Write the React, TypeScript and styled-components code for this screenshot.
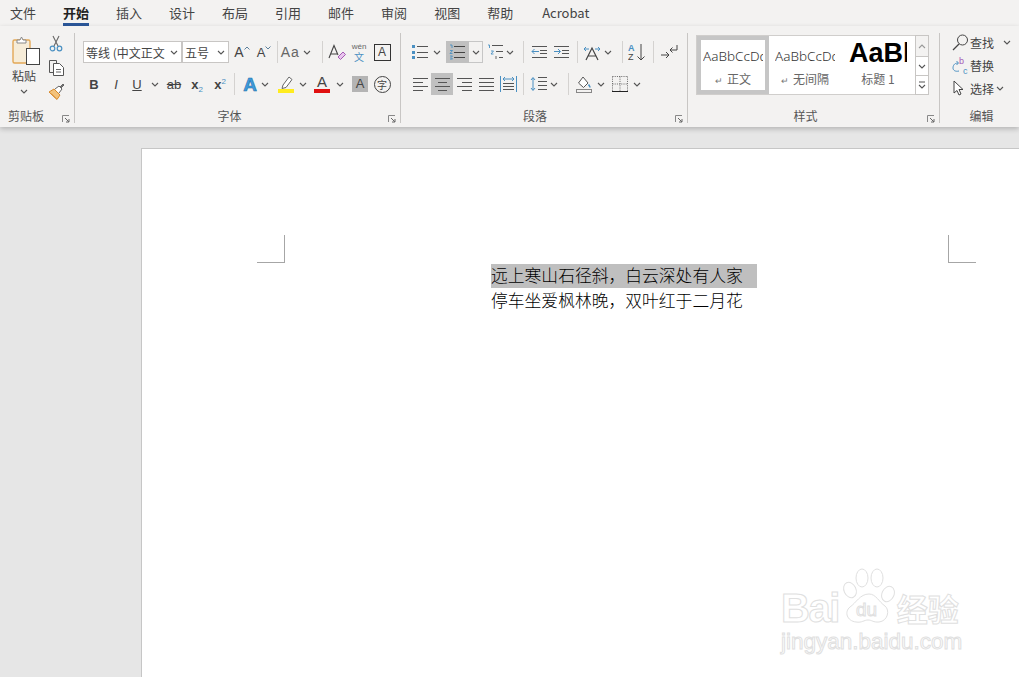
import React from "react";
import styled, { createGlobalStyle } from "styled-components";

const BLUE = "#4a90c2";
const CJK = `"Noto Sans CJK SC", "Noto Sans", sans-serif`;

const GlobalStyle = createGlobalStyle`
  html, body { margin: 0; padding: 0; background: #e6e6e6; }
  body { font-family: ${CJK}; color: #333; overflow: hidden; }
`;

const Drawing = styled.svg`
  display: block;
  flex-shrink: 0;
`;

// small drawings used on the ribbon
const Svg: React.FC<{ w?: number; h?: number; children: React.ReactNode }> = ({ w = 18, h = 18, children }) => (
  <Drawing width={w} height={h} viewBox={`0 0 ${w} ${h}`} fill="none">
    {children}
  </Drawing>
);

const Chevron = () => (
  <Svg w={8} h={5}>
    <path d="M1 1l3 3 3-3" stroke="#555" strokeWidth="1.1" />
  </Svg>
);

const ChevronUp = () => (
  <Svg w={8} h={5}>
    <path d="M1 4l3-3 3 3" stroke="#999" strokeWidth="1.1" />
  </Svg>
);

const MoreChevron = () => (
  <Svg w={8} h={8}>
    <path d="M1 1h6M1 4l3 3 3-3" stroke="#555" strokeWidth="1.1" />
  </Svg>
);

const Caret: React.FC<{ down?: boolean }> = ({ down }) => (
  <CaretBox>
    <Svg w={6} h={4}>
      <path d={down ? "M.5 .5l2.500 2.500 2.500-2.500" : "M.5 3.500l2.500-2.500 2.500 2.500"} stroke="#5a7f9c" />
    </Svg>
  </CaretBox>
);

const Launcher = () => (
  <Svg w={8} h={8}>
    <path d="M.5 7V.5H7" stroke="#888" />
    <path d="M3 3l4 4M4 7h3V4" stroke="#666" />
  </Svg>
);

const PasteIcon = () => (
  <Svg w={30} h={31}>
    <rect x="2" y="5" width="17" height="23" rx="1.5" fill="#f6ecd8" stroke="#e3a857" strokeWidth="1.4" />
    <path d="M6 8V5h3l1.5-3 1.5 3h3v3z" fill="#fff" stroke="#888" />
    <rect x="15.5" y="13.5" width="13" height="16" fill="#fff" stroke="#444" />
  </Svg>
);

const Scissors = () => (
  <Svg w={14} h={17}>
    <path d="M4 1l5 10M10 1L5 11" stroke="#666" strokeWidth="1.1" />
    <circle cx="3.5" cy="13.5" r="2.3" stroke={BLUE} strokeWidth="1.2" />
    <circle cx="10.5" cy="13.5" r="2.3" stroke={BLUE} strokeWidth="1.2" />
  </Svg>
);

const CopyIcon = () => (
  <Svg w={17} h={17}>
    <path d="M5.5 13.5h-4v-12h7v3" stroke="#555" />
    <path d="M5.5 4.5h6l4 4v8h-10z" fill="#fff" stroke="#555" />
    <path d="M8 10.5h5M8 13h5" stroke="#666" />
  </Svg>
);

const BrushIcon = () => (
  <Svg w={17} h={17}>
    <path d="M1 9l5-3 6 6-3 4.5z" fill="#f3c27b" stroke="#d88a2c" />
    <path d="M7 6l4-3 3 3-3 4" fill="#fff" stroke="#666" />
    <path d="M12 4l3-3 1 1-3 3" fill="#777" stroke="#666" />
    <path d="M3 10.5l5 5" stroke="#d88a2c" />
  </Svg>
);

const lines = (x1: number, x2: number, ys: number[], color = "#555") =>
  ys.map(y => <path key={y} d={`M${x1} ${y + 0.5}H${x2}`} stroke={color} />);

const Bullets = () => (
  <Svg w={17} h={16}>
    <rect x="0" y="1" width="3" height="3" fill={BLUE} />
    <rect x="0" y="7" width="3" height="3" fill={BLUE} />
    <rect x="0" y="12" width="3" height="3" fill={BLUE} />
    {lines(5, 16, [2, 8, 13])}
  </Svg>
);

const Numbered = () => (
  <Svg w={17} h={16}>
    <path d="M1 1h2v3M1 6.5h2.5L1 9.5h2.5M1 12h2.5L2 13.500l1.500 1.500H1" stroke={BLUE} strokeWidth=".9" />
    {lines(5, 16, [2, 8, 13], "#444")}
  </Svg>
);

const Multilevel = () => (
  <Svg w={17} h={16}>
    <path d="M1 1h1.500v3M4 7h2.500L4 10h2.500" stroke={BLUE} strokeWidth=".9" />
    <path d="M9 12v3" stroke="#666" />
    {lines(5, 16, [1])}
    {lines(9, 16, [7])}
    {lines(12, 16, [13])}
  </Svg>
);

const Indent: React.FC<{ grow?: boolean }> = ({ grow }) => (
  <Svg w={17} h={14}>
    {lines(1, 16, [1, 12])}
    {lines(9, 16, [5, 8])}
    <path
      d={grow ? "M1 6.500h6M5 4l2.500 2.500L5 9" : "M8 6.500H1M3.500 4L1 6.500 3.500 9"}
      stroke={BLUE}
    />
  </Svg>
);

const DirectionIcon = () => (
  <Svg w={18} h={17}>
    <path d="M1 5h5M3 3L1 5l2 2M17 5h-5M15 3l2 2-2 2" stroke={BLUE} />
    <path d="M3 16L9 4l6 12M5.500 12h7" stroke="#444" strokeWidth="1.2" />
  </Svg>
);

const SortIcon = () => (
  <Svg w={18} h={18}>
    <text x="0" y="8" fontSize="9" fontWeight="700" fill={BLUE} fontFamily="Liberation Sans, sans-serif">A</text>
    <text x="0" y="17" fontSize="9" fill="#444" fontFamily="Liberation Sans, sans-serif">Z</text>
    <path d="M13 1v16M9.500 13.500L13 17l3.500-3.500" stroke="#444" />
  </Svg>
);

const ShowMarks = () => (
  <Svg w={18} h={16}>
    <path d="M1 11h8M6 8l3 3-3 3" stroke="#444" />
    <path d="M17 1v5h-7M12.500 3.500L10 6l2.500 2.500" stroke="#444" />
  </Svg>
);

const AlignIcon: React.FC<{ kind: "left" | "center" | "right" | "full" }> = ({ kind }) => {
  const rows: [number, number, number][] = {
    left: [[1, 16, 1], [1, 11, 5], [1, 16, 9], [1, 11, 13]],
    center: [[1, 16, 1], [4, 13, 5], [1, 16, 9], [4, 13, 13]],
    right: [[1, 16, 1], [6, 16, 5], [1, 16, 9], [6, 16, 13]],
    full: [[1, 16, 1], [1, 16, 5], [1, 16, 9], [1, 16, 13]],
  }[kind] as [number, number, number][];
  return (
    <Svg w={17} h={15}>
      {rows.map(([a, b, y]) => (
        <path key={y} d={`M${a} ${y + 0.5}H${b}`} stroke="#555" />
      ))}
    </Svg>
  );
};

const DistributedIcon = () => (
  <Svg w={17} h={16}>
    <path d="M.5 0v16M16.500 0v16" stroke={BLUE} />
    <path d="M3 3h11M5 1L3 3l2 2M12 1l2 2-2 2" stroke={BLUE} />
    {lines(3, 14, [7, 10, 13])}
  </Svg>
);

const LineSpacing = () => (
  <Svg w={18} h={16}>
    <path d="M3 2v12M1 4l2-2.500L5 4M1 12l2 2.500L5 12" stroke={BLUE} />
    {lines(8, 17, [1, 5, 9, 13])}
  </Svg>
);

const FillIcon = () => (
  <Svg w={16} h={17}>
    <path d="M7 1l5 6-4.500 4.500L2.500 7z" stroke="#555" fill="#fff" />
    <path d="M12.500 8.500c1 1.500 1.500 2 1.500 3" stroke={BLUE} strokeWidth="1.500" />
    <rect x=".5" y="13.500" width="15" height="3" fill="#f3f2f1" stroke="#888" />
  </Svg>
);

const BorderIcon = () => (
  <Svg w={16} h={16}>
    <path d="M.5.5h15M.5.500v15M15.500.5v15M8 .5v15M.5 8h15" stroke="#666" strokeDasharray="1 1.200" />
    <path d="M0 15.500h16" stroke="#222" />
  </Svg>
);

const EraserA = () => (
  <Svg w={18} h={17}>
    <path d="M1 14L6 1.500 10 11M2.500 10H9" stroke="#444" strokeWidth="1.1" />
    <path d="M10 13l5-5 2.500 2.500-5 5z" fill="#e9c6ee" stroke="#a55bb5" />
  </Svg>
);

const HighlightIcon = () => (
  <Svg w={17} h={18}>
    <path d="M5 10l6-8 3 2.500-6 8-4 1z" fill="#fff" stroke="#666" />
    <rect x="0" y="14" width="16" height="4" fill="#ffec1f" />
  </Svg>
);

const SearchIcon = () => (
  <Svg w={17} h={17}>
    <circle cx="10.500" cy="6" r="5" stroke="#444" />
    <path d="M7 10l-6 6" stroke="#444" strokeWidth="1.200" />
  </Svg>
);

const ReplaceIcon = () => (
  <Svg w={17} h={18}>
    <text x="7" y="7" fontSize="9" fill="#a55bb5" fontFamily="Liberation Sans, sans-serif">b</text>
    <text x="11" y="17" fontSize="9" fill={BLUE} fontFamily="Liberation Sans, sans-serif">c</text>
    <path d="M6 6C2 6 1 9 1 11c0 2 2 4 6 3M4.500 4L6.500 6 4.500 8" stroke={BLUE} />
  </Svg>
);

const CursorIcon = () => (
  <Svg w={14} h={17}>
    <path d="M2 1v12l3-2.500 2 4.500 2-1-2-4.500h4z" fill="#fff" stroke="#444" />
  </Svg>
);

const Screen = styled.div`
  position: relative;
  width: 1019px;
  height: 677px;
  overflow: hidden;
  display: flex;
  flex-direction: column;
  background: #e6e6e6;
`;

const TabBar = styled.div`
  display: flex;
  height: 26px;
  padding-left: 10px;
  background: #f3f2f1;
  box-sizing: border-box;
`;

const Tab = styled.div<{ $active?: boolean; $ml?: number }>`
  margin-right: 27px;
  margin-left: ${p => p.$ml ?? 0}px;
  height: 26px;
  box-sizing: border-box;
  font-size: 13px;
  line-height: 26px;
  color: ${p => (p.$active ? "#222" : "#444")};
  font-weight: ${p => (p.$active ? 700 : 400)};
  border-bottom: 3px solid ${p => (p.$active ? "#2b579a" : "transparent")};
`;

const Ribbon = styled.div`
  display: flex;
  height: 101px;
  background: #f3f2f1;
  box-shadow: 0 2px 5px rgba(0, 0, 0, 0.22);
  position: relative;
  z-index: 1;
`;

const Group = styled.div<{ $w: number }>`
  width: ${p => p.$w}px;
  flex-shrink: 0;
  display: flex;
  flex-direction: column;
`;

const GroupBody = styled.div`
  flex: 1;
  min-height: 0;
`;

const Divider = styled.div`
  width: 1px;
  flex-shrink: 0;
  margin: 7px 0 4px;
  background: #c8c6c4;
`;

const Footer = styled.div<{ $left?: number }>`
  height: 16px;
  margin-bottom: 3px;
  display: grid;
  grid-template-columns: ${p => (p.$left ? "auto 1fr" : "1fr auto 1fr")};
  padding: 0 4px 0 ${p => p.$left ?? 0}px;
  align-items: center;
`;

// $shift moves the caption off the group's middle, as Word's captions sit
const FooterLabel = styled.div<{ $start?: boolean; $shift?: number }>`
  font-size: 12px;
  line-height: 16px;
  color: #555;
  ${p => (p.$start ? "" : "grid-column: 2;")}
  margin-right: ${p => (p.$shift && p.$shift < 0 ? -2 * p.$shift : 0)}px;
  margin-left: ${p => (p.$shift && p.$shift > 0 ? 2 * p.$shift : 0)}px;
`;

const FooterMark = styled.div`
  justify-self: end;
  display: flex;
  margin-top: 6px;
`;

const ClipBody = styled(GroupBody)`
  display: flex;
  padding: 9px 0 0 11px;
`;

const PasteColumn = styled.div`
  width: 30px;
  display: flex;
  flex-direction: column;
  align-items: center;
  font-size: 12px;
  color: #444;
  line-height: 14px;
`;

const PasteLabel = styled.div`
  margin: 3px 4px 0 0;
`;

const PasteChevron = styled.div`
  margin: 6px 4px 0 0;
`;

const SmallColumn = styled.div`
  margin-left: 6px;
  width: 18px;
  display: flex;
  flex-direction: column;
  align-items: center;
  gap: 7px;
`;

const ToolRows = styled(GroupBody)<{ $pad: number }>`
  padding: 15px 0 0 ${p => p.$pad}px;
  display: flex;
  flex-direction: column;
  gap: 10px;
`;

const Row = styled.div`
  display: flex;
  align-items: center;
  height: 22px;
`;

const Btn = styled.div<{ $w: number; $ml?: number; $on?: boolean; $boxed?: boolean }>`
  width: ${p => p.$w}px;
  height: 22px;
  margin-left: ${p => p.$ml ?? 0}px;
  flex-shrink: 0;
  box-sizing: border-box;
  display: flex;
  align-items: center;
  justify-content: center;
  background: ${p => (p.$on ? "#c0c0c0" : "transparent")};
  border: ${p => (p.$boxed ? "1px solid #c6c6c6" : "none")};
  border-left: ${p => (p.$boxed ? "none" : undefined)};
  color: #444;
`;

const Sep = styled.div<{ $ml?: number }>`
  width: 1px;
  height: 22px;
  flex-shrink: 0;
  margin-left: ${p => p.$ml ?? 0}px;
  background: #d4d2d0;
`;

const Combo = styled.div<{ $w: number }>`
  width: ${p => p.$w}px;
  height: 22px;
  box-sizing: border-box;
  flex-shrink: 0;
  display: flex;
  align-items: center;
  justify-content: space-between;
  padding: 0 3px 0 2px;
  background: #fff;
  border: 1px solid #c8c6c4;
  font-size: 12px;
  color: #444;
  white-space: nowrap;
  overflow: hidden;
`;

const Glyph = styled.span<{ $size?: number; $weight?: number; $italic?: boolean; $under?: boolean; $strike?: boolean; $color?: string; $track?: number }>`
  font-family: "Liberation Sans", sans-serif;
  font-size: ${p => p.$size ?? 13}px;
  font-weight: ${p => p.$weight ?? 400};
  font-style: ${p => (p.$italic ? "italic" : "normal")};
  text-decoration: ${p => (p.$under ? "underline" : p.$strike ? "line-through" : "none")};
  color: ${p => p.$color ?? "#444"};
  letter-spacing: ${p => p.$track ?? 0}px;
  line-height: 1;
`;

const CaretBox = styled.div`
  margin: 0 0 8px 0;
`;

const Tiny = styled.sup<{ $down?: boolean }>`
  font-size: 8px;
  font-weight: 400;
  color: ${BLUE};
  vertical-align: ${p => (p.$down ? "-3px" : "5px")};
  line-height: 0;
`;

const WenStack = styled.div`
  display: flex;
  flex-direction: column;
  align-items: center;
`;

const WenPinyin = styled.span`
  display: block;
  height: 8px;
  font-family: "Liberation Sans", sans-serif;
  font-size: 8px;
  line-height: 8px;
  color: #666;
`;

const WenChar = styled.span`
  display: block;
  height: 10px;
  margin-top: 1px;
  font-size: 10px;
  line-height: 10px;
  color: ${BLUE};
`;

const BoxedA = styled.div`
  width: 15px;
  height: 15px;
  border: 1px solid #333;
  display: flex;
  align-items: center;
  justify-content: center;
  font-family: "Liberation Sans", sans-serif;
  font-size: 12px;
  color: #444;
`;

const ColorA = styled.div<{ $bar: string }>`
  width: 16px;
  height: 18px;
  box-sizing: border-box;
  border-bottom: 4px solid ${p => p.$bar};
  text-align: center;
  font-family: "Liberation Sans", sans-serif;
  font-size: 15px;
  line-height: 14px;
  color: #444;
`;

const OutlineA = styled.span`
  font-family: "Liberation Sans", sans-serif;
  font-size: 19px;
  font-weight: 700;
  color: #3f9bdc;
  -webkit-text-stroke: 0.6px #1d6fa8;
  line-height: 1;
`;

const ShadedA = styled.div`
  width: 16px;
  height: 16px;
  background: #b4b4b4;
  text-align: center;
  font-family: "Liberation Sans", sans-serif;
  font-size: 13px;
  line-height: 16px;
  color: #444;
`;

const Encircled = styled.div`
  width: 15px;
  height: 15px;
  border: 1px solid #444;
  border-radius: 50%;
  display: flex;
  align-items: center;
  justify-content: center;
  font-size: 10px;
  color: #444;
`;

const Gallery = styled.div`
  display: flex;
  height: 60px;
  margin: 9px 0 0 8px;
`;

const StyleList = styled.div`
  width: 219px;
  height: 60px;
  display: flex;
  background: #fff;
  box-sizing: border-box;
  border: 1px solid #d0cecc;
  border-right: none;
`;

const StyleItem = styled.div<{ $w: number; $on?: boolean }>`
  width: ${p => p.$w}px;
  flex-shrink: 0;
  box-sizing: border-box;
  border: ${p => (p.$on ? "4px solid #c6c6c6" : "none")};
  padding-top: ${p => (p.$on ? 5 : 9)}px;
  display: flex;
  flex-direction: column;
  align-items: center;
  overflow: hidden;
`;

const StyleSample = styled.div<{ $width: number }>`
  width: ${p => p.$width}px;
  height: 22px;
  overflow: hidden;
  white-space: nowrap;
  font-family: "Noto Sans", sans-serif;
  font-size: 13.5px;
  font-weight: 300;
  line-height: 22px;
  color: #333;
`;

const HeadingSample = styled.div`
  width: 58px;
  height: 28px;
  margin-top: -6px;
  overflow: hidden;
  white-space: nowrap;
  font-family: "Liberation Sans", sans-serif;
  font-size: 27px;
  font-weight: 700;
  line-height: 28px;
  color: #000;
`;

const StyleName = styled.div`
  margin-top: 4px;
  font-size: 12px;
  line-height: 16px;
  color: #666;
  white-space: nowrap;
`;

const ParaMark = styled.span`
  font-size: 9px;
  color: #777;
  margin-right: 4px;
`;

const ScrollColumn = styled.div`
  width: 14px;
  display: flex;
  flex-direction: column;
`;

const ScrollBtn = styled.div<{ $h: number; $dim?: boolean }>`
  height: ${p => p.$h}px;
  box-sizing: border-box;
  background: ${p => (p.$dim ? "#f3f2f1" : "#fff")};
  border: 1px solid #c8c6c4;
  margin-bottom: -1px;
  display: flex;
  align-items: center;
  justify-content: center;
`;

const EditBody = styled(GroupBody)`
  padding: 5px 0 0 12px;
  display: flex;
  flex-direction: column;
`;

const EditRow = styled.div`
  height: 23px;
  display: flex;
  align-items: center;
  font-size: 12px;
  color: #444;
  white-space: nowrap;
`;

const EditIcon = styled.div`
  width: 18px;
  display: flex;
`;

const EditChevron = styled.div<{ $ml: number }>`
  margin-left: ${p => p.$ml}px;
  display: flex;
`;

const Workspace = styled.div`
  flex: 1;
  min-height: 0;
  padding: 21px 0 0 141px;
  overflow: hidden;
`;

const Page = styled.div`
  width: 900px;
  height: 600px;
  padding-top: 86px;
  box-sizing: border-box;
  background: #fff;
  border-left: 1px solid #c6c6c6;
  border-top: 1px solid #c6c6c6;
`;

const MarginRow = styled.div`
  display: flex;
  gap: 663px;
  margin-left: 115px;
`;

const CropMark = styled.div<{ $side: "left" | "right" }>`
  width: 28px;
  height: 28px;
  box-sizing: border-box;
  border-bottom: 1px solid #a6a6a6;
  border-${p => (p.$side === "left" ? "right" : "left")}: 1px solid #a6a6a6;
`;

const Body = styled.div`
  margin: 1px 0 0 349px;
  font-family: "Noto Sans CJK SC", sans-serif;
  font-weight: 300;
  font-size: 16.8px;
  color: #000;
`;

const Line = styled.div<{ $selected?: boolean }>`
  width: ${p => (p.$selected ? 266 : 252)}px;
  height: ${p => (p.$selected ? 24 : 25)}px;
  line-height: ${p => (p.$selected ? 22 : 25)}px;
  white-space: nowrap;
  background: ${p => (p.$selected ? "#bfbfbf" : "transparent")};
`;

const Watermark = styled.div`
  position: absolute;
  left: 781px;
  top: 566px;
  width: 190px;
  color: #fff;
  -webkit-text-stroke: 1px #e0e0e0;
`;

const MarkTop = styled.div`
  display: flex;
  align-items: flex-end;
`;

const MarkWord = styled.div`
  font-family: "Liberation Sans", sans-serif;
  font-weight: 700;
  font-size: 40px;
  letter-spacing: -1.5px;
  line-height: 48px;
  height: 42px;
`;

const MarkPaw = styled(Drawing)`
  margin-left: 2px;
`;

const MarkCjk = styled.div`
  font-weight: 700;
  font-size: 31px;
  line-height: 48px;
  height: 42px;
  margin-left: 2px;
`;

const MarkUrl = styled.div`
  font-family: "Liberation Sans", sans-serif;
  font-size: 22.5px;
  line-height: 24px;
  white-space: nowrap;
  margin-top: 4px;
`;

const Watermarks = () => (
  <Watermark>
    <MarkTop>
      <MarkWord>Bai</MarkWord>
      <MarkPaw width="54" height="60" viewBox="0 0 54 60">
        <g fill="#fff" stroke="#e0e0e0">
          <ellipse cx="9" cy="24" rx="6" ry="8" transform="rotate(-25 9 24)" />
          <ellipse cx="21" cy="12" rx="6" ry="9" />
          <ellipse cx="36" cy="12" rx="6" ry="9" />
          <ellipse cx="47" cy="28" rx="6" ry="8" transform="rotate(25 47 28)" />
          <path d="M28 28c7 0 10 8 16 12 5 4 3 15-6 16-6 .5-7-2-11-2s-6 3-12 2C6 55 3 46 9 41c6-4 10-13 19-13z" />
        </g>
        <text x="15" y="50" fontSize="19" fontFamily="Liberation Sans, sans-serif" fill="#fff" stroke="#e0e0e0">du</text>
      </MarkPaw>
      <MarkCjk>经验</MarkCjk>
    </MarkTop>
    <MarkUrl>jingyan.baidu.com</MarkUrl>
  </Watermark>
);

const tabs = ["文件", "开始", "插入", "设计", "布局", "引用", "邮件", "审阅", "视图", "帮助"];

const App: React.FC = () => (
  <>
    <GlobalStyle />
    <Screen>
      <TabBar>
        {tabs.map(t => (
          <Tab key={t} $active={t === "开始"}>{t}</Tab>
        ))}
        <Tab $ml={2}>Acrobat</Tab>
      </TabBar>

      <Ribbon>
        <Group $w={74}>
          <ClipBody>
            <PasteColumn>
              <PasteIcon />
              <PasteLabel>粘贴</PasteLabel>
              <PasteChevron><Chevron /></PasteChevron>
            </PasteColumn>
            <SmallColumn>
              <Scissors />
              <CopyIcon />
              <BrushIcon />
            </SmallColumn>
          </ClipBody>
          <Footer $left={8}>
            <FooterLabel $start>剪贴板</FooterLabel>
            <FooterMark><Launcher /></FooterMark>
          </Footer>
        </Group>
        <Divider />

        <Group $w={325}>
          <ToolRows $pad={8}>
            <Row>
              <Combo $w={99}>等线 (中文正文<Chevron /></Combo>
              <Combo $w={47}>五号<Chevron /></Combo>
              <Btn $w={22} $ml={2}><Glyph $size={14}>A</Glyph><Caret /></Btn>
              <Btn $w={22}><Glyph $size={13}>A</Glyph><Caret down /></Btn>
              <Sep $ml={2} />
              <Btn $w={32} $ml={2}><Glyph $size={14} $color="#666" $track={1}>Aa</Glyph>&nbsp;<Chevron /></Btn>
              <Sep $ml={10} />
              <Btn $w={22} $ml={3}><EraserA /></Btn>
              <Btn $w={22}>
                <WenStack><WenPinyin>wén</WenPinyin><WenChar>文</WenChar></WenStack>
              </Btn>
              <Btn $w={22} $ml={1}><BoxedA>A</BoxedA></Btn>
            </Row>
            <Row>
              <Btn $w={22}><Glyph $weight={700}>B</Glyph></Btn>
              <Btn $w={22}><Glyph $italic>I</Glyph></Btn>
              <Btn $w={20}><Glyph $under>U</Glyph></Btn>
              <Btn $w={16}><Chevron /></Btn>
              <Btn $w={22}><Glyph $strike>ab</Glyph></Btn>
              <Btn $w={22} $ml={1}><Glyph $weight={700}>x<Tiny $down>2</Tiny></Glyph></Btn>
              <Btn $w={22} $ml={1}><Glyph $weight={700}>x<Tiny>2</Tiny></Glyph></Btn>
              <Sep $ml={3} />
              <Btn $w={22} $ml={4}><OutlineA>A</OutlineA></Btn>
              <Btn $w={8}><Chevron /></Btn>
              <Btn $w={22} $ml={6}><HighlightIcon /></Btn>
              <Btn $w={12}><Chevron /></Btn>
              <Btn $w={22} $ml={2}><ColorA $bar="#e01010">A</ColorA></Btn>
              <Btn $w={14}><Chevron /></Btn>
              <Btn $w={22} $ml={2}><ShadedA>A</ShadedA></Btn>
              <Btn $w={22}><Encircled>字</Encircled></Btn>
            </Row>
          </ToolRows>
          <Footer>
            <FooterLabel $shift={-6}>字体</FooterLabel>
            <FooterMark><Launcher /></FooterMark>
          </Footer>
        </Group>
        <Divider />

        <Group $w={286}>
          <ToolRows $pad={7}>
            <Row>
              <Btn $w={24}><Bullets /></Btn>
              <Btn $w={10}><Chevron /></Btn>
              <Btn $w={23} $ml={4} $on><Numbered /></Btn>
              <Btn $w={14} $boxed><Chevron /></Btn>
              <Btn $w={20} $ml={2}><Multilevel /></Btn>
              <Btn $w={10}><Chevron /></Btn>
              <Sep $ml={8} />
              <Btn $w={22} $ml={4}><Indent /></Btn>
              <Btn $w={22}><Indent grow /></Btn>
              <Sep $ml={5} />
              <Btn $w={24} $ml={2}><DirectionIcon /></Btn>
              <Btn $w={7}><Chevron /></Btn>
              <Sep $ml={11} />
              <Btn $w={22} $ml={3}><SortIcon /></Btn>
              <Sep $ml={5} />
              <Btn $w={22} $ml={4}><ShowMarks /></Btn>
            </Row>
            <Row>
              <Btn $w={22} $ml={1}><AlignIcon kind="left" /></Btn>
              <Btn $w={22} $on><AlignIcon kind="center" /></Btn>
              <Btn $w={22}><AlignIcon kind="right" /></Btn>
              <Btn $w={22}><AlignIcon kind="full" /></Btn>
              <Btn $w={22}><DistributedIcon /></Btn>
              <Sep $ml={4} />
              <Btn $w={22} $ml={4}><LineSpacing /></Btn>
              <Btn $w={8}><Chevron /></Btn>
              <Sep $ml={10} />
              <Btn $w={22} $ml={4}><FillIcon /></Btn>
              <Btn $w={12}><Chevron /></Btn>
              <Btn $w={22} $ml={2}><BorderIcon /></Btn>
              <Btn $w={12}><Chevron /></Btn>
            </Row>
          </ToolRows>
          <Footer>
            <FooterLabel $shift={-7}>段落</FooterLabel>
            <FooterMark><Launcher /></FooterMark>
          </Footer>
        </Group>
        <Divider />

        <Group $w={251}>
          <GroupBody>
            <Gallery>
              <StyleList>
                <StyleItem $w={72} $on>
                  <StyleSample $width={60}>AaBbCcDd</StyleSample>
                  <StyleName><ParaMark>↵</ParaMark>正文</StyleName>
                </StyleItem>
                <StyleItem $w={72}>
                  <StyleSample $width={60}>AaBbCcDd</StyleSample>
                  <StyleName><ParaMark>↵</ParaMark>无间隔</StyleName>
                </StyleItem>
                <StyleItem $w={74}>
                  <HeadingSample>AaBbC</HeadingSample>
                  <StyleName>标题 1</StyleName>
                </StyleItem>
              </StyleList>
              <ScrollColumn>
                <ScrollBtn $h={22} $dim><ChevronUp /></ScrollBtn>
                <ScrollBtn $h={20}><Chevron /></ScrollBtn>
                <ScrollBtn $h={20}><MoreChevron /></ScrollBtn>
              </ScrollColumn>
            </Gallery>
          </GroupBody>
          <Footer>
            <FooterLabel $shift={-6}>样式</FooterLabel>
            <FooterMark><Launcher /></FooterMark>
          </Footer>
        </Group>
        <Divider />

        <Group $w={79}>
          <EditBody>
            <EditRow>
              <EditIcon><SearchIcon /></EditIcon>查找<EditChevron $ml={9}><Chevron /></EditChevron>
            </EditRow>
            <EditRow><EditIcon><ReplaceIcon /></EditIcon>替换</EditRow>
            <EditRow>
              <EditIcon><CursorIcon /></EditIcon>选择<EditChevron $ml={2}><Chevron /></EditChevron>
            </EditRow>
          </EditBody>
          <Footer>
            <FooterLabel $shift={4}>编辑</FooterLabel>
          </Footer>
        </Group>
      </Ribbon>

      <Workspace>
        <Page>
          <MarginRow>
            <CropMark $side="left" />
            <CropMark $side="right" />
          </MarginRow>
          <Body>
            <Line $selected>远上寒山石径斜，白云深处有人家</Line>
            <Line>停车坐爱枫林晚，双叶红于二月花</Line>
          </Body>
        </Page>
      </Workspace>

      <Watermarks />
    </Screen>
  </>
);

export default App;
